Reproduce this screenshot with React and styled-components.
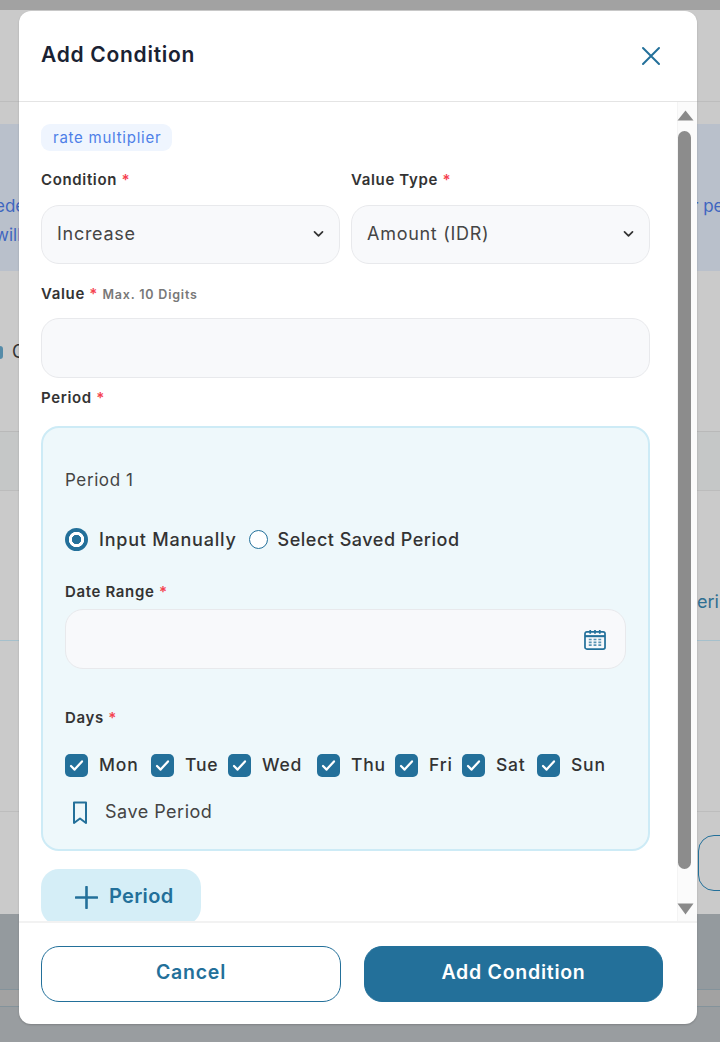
import React from "react";
import styled, { createGlobalStyle } from "styled-components";

const brand = "#23709a";
const font = `Inter, "Noto Sans", "Liberation Sans", sans-serif`;

const Global = createGlobalStyle`
  html, body { margin: 0; padding: 0; height: 1042px; overflow: hidden; background: #9a9ea1; }
  * { box-sizing: border-box; }
`;

const Page = styled.div`
  position: relative;
  width: 720px;
  height: 1042px;
  overflow: hidden;
  font-family: ${font};
`;

const Backdrop = styled.div`
  display: flex;
  flex-direction: column;
  height: 100%;
`;

const Band = styled.div`
  flex: ${(p) => (p.$h ? `0 0 ${p.$h}px` : "1 1 auto")};
  background: ${(p) => p.$bg || "#cacaca"};
  border-bottom: ${(p) => (p.$line ? `1px solid ${p.$line}` : "none")};
  display: flex;
  justify-content: space-between;
  align-items: ${(p) => p.$align || "center"};
`;

const NoticeText = styled.div`
  font-size: 17px;
  line-height: 29px;
  color: #3f66c0;
  white-space: nowrap;
  padding-top: 68px;
  margin-left: ${(p) => p.$ml || 0}px;
  width: ${(p) => (p.$w ? `${p.$w}px` : "auto")};
`;

const BackText = styled.div`
  font-size: 18px;
  color: ${(p) => p.$color || "#333"};
  white-space: nowrap;
  padding-top: ${(p) => p.$pt || 0}px;
  width: ${(p) => (p.$w ? `${p.$w}px` : "auto")};
`;

const GhostDot = styled.span`
  display: inline-block;
  width: 3px;
  height: 13px;
  margin-right: 9px;
  border-radius: 0 7px 7px 0;
  background: ${brand};
  opacity: 0.7;
  vertical-align: middle;
`;

const GhostButton = styled.div`
  width: 30px;
  height: 56px;
  margin: 23px -8px 0 0;
  border: 1px solid ${brand};
  border-radius: 16px 0 0 16px;
`;

const Modal = styled.div`
  position: absolute;
  top: 11px;
  left: 19px;
  width: 678px;
  height: 1013px;
  display: flex;
  flex-direction: column;
  background: #fff;
  border-radius: 12px;
  overflow: hidden;
  box-shadow: 0 1px 2px rgba(0, 0, 0, 0.18);
`;

const Header = styled.header`
  flex: 0 0 91px;
  display: flex;
  align-items: center;
  justify-content: space-between;
  padding: 0 36px 3px 22px;
  border-bottom: 1px solid #e4e4e4;
`;

const Title = styled.h2`
  margin: 0;
  font-size: 21px;
  font-weight: 600;
  letter-spacing: 0.72px;
  color: #1a2233;
`;

const CloseButton = styled.button`
  display: flex;
  padding: 0;
  border: 0;
  background: none;
  margin-top: 3px;
`;

const Body = styled.div`
  flex: 0 0 819px;
  display: flex;
  overflow: hidden;
`;

const Content = styled.div`
  flex: 1;
  padding: 22px 27px 0 22px;
`;

const Chip = styled.span`
  display: inline-flex;
  align-items: center;
  height: 27px;
  padding: 0 11px 0 12px;
  border-radius: 9px;
  background: #eff5fe;
  color: #4d7fe8;
  font-size: 15px;
  letter-spacing: 0.75px;
`;

const Row = styled.div`
  display: grid;
  grid-template-columns: 299px 299px;
  column-gap: 11px;
  margin-top: 19px;
`;

const Label = styled.label`
  display: block;
  height: 20px;
  line-height: 20px;
  font-size: 15px;
  font-weight: 600;
  letter-spacing: 0.65px;
  color: #333;
  white-space: nowrap;
  margin-top: ${(p) => p.$mt || 0}px;
`;

const Star = styled.span`
  color: #f5424f;
`;

const Hint = styled.span`
  font-size: 12.5px;
  color: #787878;
  letter-spacing: 0.8px;
`;

const Select = styled.div`
  height: 59px;
  margin-top: 15px;
  padding: 0 15px 2px;
  display: flex;
  align-items: center;
  justify-content: space-between;
  background: #f8f9fb;
  border: 1px solid #e8e9ec;
  border-radius: 18px;
  font-size: 18px;
  letter-spacing: 0.72px;
  color: #454545;
`;

const Input = styled.div`
  height: 60px;
  margin-top: ${(p) => p.$mt || 14}px;
  padding: 0 19px;
  display: flex;
  align-items: center;
  justify-content: flex-end;
  background: #f8f9fb;
  border: 1px solid #e8e9ec;
  border-radius: 18px;
`;

const PeriodCard = styled.section`
  height: 425px;
  margin-top: 18px;
  padding: 40px 22px 0;
  background: #eef8fb;
  border: 2px solid #cdebf6;
  border-radius: 18px;
`;

const CardTitle = styled.div`
  height: 24px;
  line-height: 24px;
  font-size: 17px;
  letter-spacing: 0.6px;
  color: #444;
`;

const RadioRow = styled.div`
  display: flex;
  align-items: center;
  height: 24px;
  margin-top: 35px;
`;

const Radio = styled.span`
  width: ${(p) => (p.$on ? 23 : 19)}px;
  height: ${(p) => (p.$on ? 23 : 19)}px;
  flex: none;
  border-radius: 50%;
  background: ${(p) => (p.$on ? `radial-gradient(circle, ${brand} 0 4.4px, #fff 5px 7.4px, ${brand} 8px)` : "#fff")};
  border: ${(p) => (p.$on ? "none" : `1.5px solid ${brand}`)};
`;

const OptionText = styled.span`
  font-size: 18px;
  font-weight: 500;
  letter-spacing: ${(p) => p.$ls}px;
  color: #333;
  margin: 0 ${(p) => p.$mr || 0}px 0 ${(p) => p.$ml || 11}px;
  white-space: nowrap;
`;

const Days = styled.div`
  display: flex;
  align-items: center;
  height: 23px;
  margin-top: 26px;
`;

const Day = styled.div`
  display: flex;
  align-items: center;
  width: ${(p) => p.$w}px;
  flex: none;
`;

const Check = styled.span`
  width: 23px;
  height: 23px;
  flex: none;
  display: flex;
  align-items: center;
  justify-content: center;
  background: ${brand};
  border-radius: 5px;
`;

const DayText = styled.span`
  margin: 0 0 2px 11px;
  font-size: 17.5px;
  font-weight: 500;
  letter-spacing: 0.8px;
  color: #333;
`;

const SaveRow = styled.div`
  display: flex;
  align-items: center;
  height: 24px;
  margin-top: 24px;
  padding-left: 7px;
`;

const SaveText = styled.span`
  margin: 0 0 4px 17px;
  font-size: 18px;
  letter-spacing: 0.5px;
  color: #444;
`;

const AddPeriod = styled.button`
  display: flex;
  align-items: center;
  gap: 11px;
  width: 160px;
  height: 56px;
  margin-top: 18px;
  padding: 0 0 0 34px;
  border: 0;
  border-radius: 18px;
  background: #d5eef7;
  color: ${brand};
  font-family: ${font};
  font-size: 20px;
  font-weight: 600;
  letter-spacing: 0.3px;
`;

const AddLabel = styled.span`
  margin-bottom: 2px;
`;

const Scrollbar = styled.div`
  flex: 0 0 20px;
  display: flex;
  flex-direction: column;
  align-items: flex-start;
  padding: 8px 0 6px 0;
  background: #fbfbfb;
  border-left: 1px solid #f4f4f4;
`;

const Arrow = styled.svg`
  display: block;
  flex: none;
  margin-left: -1px;
`;

const Thumb = styled.div`
  width: 13px;
  height: 738px;
  margin: 10px 0 34px 0;
  border-radius: 7px;
  background: #8c8c8c;
`;

const Footer = styled.footer`
  flex: 1;
  display: flex;
  gap: 23px;
  padding: 23px 34px 0 22px;
  border-top: 2px solid #f2f2f2;
`;

const FootButton = styled.button`
  height: 56px;
  width: ${(p) => p.$w}px;
  padding: 0 0 4px;
  border: 1.5px solid ${brand};
  border-radius: 18px;
  background: ${(p) => (p.$solid ? brand : "#fff")};
  color: ${(p) => (p.$solid ? "#fff" : brand)};
  font-family: ${font};
  font-size: 19.5px;
  font-weight: 600;
  letter-spacing: 0.75px;
`;

const Chevron = () => (
  <svg width="11" height="8" viewBox="0 0 11 8" fill="none" aria-hidden="true">
    <path d="M1.5 1.8 5.5 5.8 9.5 1.8" stroke="#333" strokeWidth="1.7" strokeLinecap="round" strokeLinejoin="round" />
  </svg>
);

const Tick = () => (
  <svg width="15" height="13" viewBox="0 0 15 13" fill="none" aria-hidden="true">
    <path d="M2 7 5.6 10.6 13 2.4" stroke="#fff" strokeWidth="2.2" strokeLinecap="round" strokeLinejoin="round" />
  </svg>
);

const days = [
  ["Mon", 86],
  ["Tue", 77],
  ["Wed", 89],
  ["Thu", 78],
  ["Fri", 67],
  ["Sat", 75],
  ["Sun", 70],
];

export default function App() {
  return (
    <Page>
      <Global />
      <Backdrop>
        <Band $h={10} $bg="#a2a2a2" />
        <Band $h={92} $line="#bdbdbd" />
        <Band $h={22} />
        <Band $h={147} $bg="#b9c0cb" $align="flex-start">
          <NoticeText $ml={-5}>ede<br />will</NoticeText>
          <NoticeText $w={28}>r pe</NoticeText>
        </Band>
        <Band $h={161} $line="#b9b9b9">
          <BackText><GhostDot />C</BackText>
        </Band>
        <Band $h={59} $bg="#c5c7c7" $line="#bcbcbc" />
        <Band $h={150} $line="#a5c0cc" $align="flex-start">
          <span />
          <BackText $color="#2f6f92" $w={23} $pt={100}>eri</BackText>
        </Band>
        <Band $h={171} $line="#bdbdbd" />
        <Band $h={102} $align="flex-start">
          <span />
          <GhostButton />
        </Band>
        <Band $h={76} $bg="#949a9e" $line="#84939b" />
        <Band $h={17} $bg="#a2a2a2" $line="#84939b" />
        <Band $bg="#999da0" />
      </Backdrop>
      <Modal>
        <Header>
          <Title>Add Condition</Title>
          <CloseButton aria-label="Close">
            <svg width="20" height="20" viewBox="0 0 20 20" fill="none" aria-hidden="true">
              <path d="M2 2 18 18M18 2 2 18" stroke={brand} strokeWidth="2" strokeLinecap="round" />
            </svg>
          </CloseButton>
        </Header>
        <Body>
          <Content>
            <Chip>rate multiplier</Chip>
            <Row>
              <div>
                <Label>Condition <Star>*</Star></Label>
                <Select>Increase<Chevron /></Select>
              </div>
              <div>
                <Label>Value Type <Star>*</Star></Label>
                <Select>Amount (IDR)<Chevron /></Select>
              </div>
            </Row>
            <Label $mt={20}>Value <Star>*</Star> <Hint>Max. 10 Digits</Hint></Label>
            <Input />
            <Label $mt={10}>Period <Star>*</Star></Label>
            <PeriodCard>
              <CardTitle>Period 1</CardTitle>
              <RadioRow>
                <Radio $on />
                <OptionText $ls={0.78} $mr={12}>Input Manually</OptionText>
                <Radio />
                <OptionText $ls={0.5} $ml={10}>Select Saved Period</OptionText>
              </RadioRow>
              <Label $mt={31}>Date Range <Star>*</Star></Label>
              <Input $mt={7}>
                <svg width="22" height="21" viewBox="0 0 23 22" fill="none" aria-hidden="true">
                  <rect x="1" y="3" width="21" height="18" rx="2" stroke={brand} strokeWidth="1.8" />
                  <path d="M1 7.5H22" stroke={brand} strokeWidth="2.2" />
                  <path d="M6.5 1V5M11.5 1V5M16.5 1V5" stroke={brand} strokeWidth="1.8" />
                  <path d="M5 11h3M10 11h3M15 11h3M5 14h3M10 14h3M15 14h3M5 17h3M10 17h3M15 17h3" stroke={brand} strokeWidth="1.8" opacity="0.75" />
                </svg>
              </Input>
              <Label $mt={39}>Days <Star>*</Star></Label>
              <Days>
                {days.map(([d, w]) => (
                  <Day key={d} $w={w}>
                    <Check><Tick /></Check>
                    <DayText>{d}</DayText>
                  </Day>
                ))}
              </Days>
              <SaveRow>
                <svg width="16" height="24" viewBox="0 0 16 24" fill="none" aria-hidden="true">
                  <path d="M2 1.5H14V22L8 17.5 2 22Z" stroke={brand} strokeWidth="2" strokeLinejoin="round" />
                </svg>
                <SaveText>Save Period</SaveText>
              </SaveRow>
            </PeriodCard>
            <AddPeriod>
              <svg width="23" height="23" viewBox="0 0 23 23" fill="none" aria-hidden="true">
                <path d="M11.5 1V22M1 11.5H22" stroke={brand} strokeWidth="2.6" strokeLinecap="round" />
              </svg>
              <AddLabel>Period</AddLabel>
            </AddPeriod>
          </Content>
          <Scrollbar>
            <Arrow width="17" height="11" viewBox="0 0 17 11"><path d="M8.5 0.5 16.5 10.5H0.5Z" fill="#8a8a8a" /></Arrow>
            <Thumb />
            <Arrow width="17" height="12" viewBox="0 0 17 12"><path d="M0.5 0.5H16.5L8.5 11.5Z" fill="#8a8a8a" /></Arrow>
          </Scrollbar>
        </Body>
        <Footer>
          <FootButton $w={300}>Cancel</FootButton>
          <FootButton $w={299} $solid>Add Condition</FootButton>
        </Footer>
      </Modal>
    </Page>
  );
}
